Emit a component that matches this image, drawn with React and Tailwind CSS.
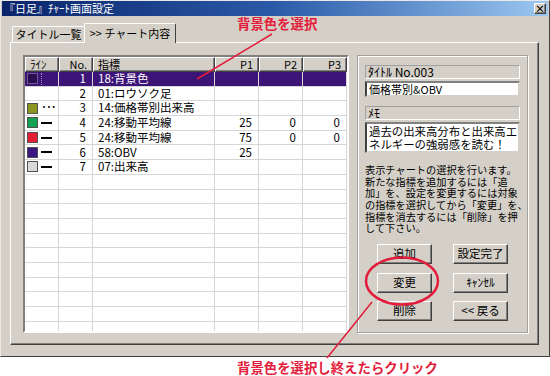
const rows = [
  { no: 1, name: "18:背景色", sw: "bg-[#2a0d52] border-[#6a5a90]", sel: true },
  { no: 2, name: "01:ロウソク足" },
  { no: 3, name: "14:価格帯別出来高", sw: "bg-[#8c9422] border-[#505050]", dots: true },
  { no: 4, name: "24:移動平均線", sw: "bg-[#12a052] border-[#505050]", p1: "25", p2: "0", p3: "0" },
  { no: 5, name: "24:移動平均線", sw: "bg-[#e41c34] border-[#505050]", p1: "75", p2: "0", p3: "0" },
  { no: 6, name: "58:OBV", sw: "bg-[#3c1680] border-[#505050]", p1: "25" },
  { no: 7, name: "07:出来高", sw: "bg-[#d8d8d8] border-[#505050]" },
];

const empties = Array.from({ length: 12 }, (_, i) => i);

const help = [
  "表示チャートの選択を行います。",
  "新たな指標を追加するには「追",
  "加」を、設定を変更するには対象",
  "の指標を選択してから「変更」を、",
  "指標を消去するには「削除」を押",
  "して下さい。",
];

const raised =
  "border border-t-white border-l-white border-r-[#404040] border-b-[#404040] shadow-[inset_-1px_-1px_0_#808080]";

const Btn = ({ children }) => (
  <div className={`w-[55px] h-[20px] flex items-center justify-center text-[11.5px] leading-none bg-[#d4d0c8] ${raised}`}>
    {children}
  </div>
);

const Cell = ({ w, right, children }) => (
  <div
    className={`${w} shrink-0 h-full border-r border-b border-[#d6d6d6] flex items-center ${
      right ? "justify-end pr-[6px]" : "pl-[5px]"
    }`}
  >
    {children}
  </div>
);

const Row = ({ r }) => (
  <div className={`flex h-[14.7px] text-[11.5px] leading-none ${r.sel ? "bg-[#3c1478] text-white" : "bg-white text-black"}`}>
    <div className="w-[34px] shrink-0 h-full border-r border-b border-[#d6d6d6] flex items-center pl-[2px] gap-[3px]">
      {r.sw && <div className={`w-[11px] h-[11px] border ${r.sw}`} />}
      {r.sel && <div className="h-[12px] border-l border-dotted border-[#a090c8]" />}
      {r.dots && <div className="text-[10px] tracking-[-1px] font-bold leading-none -mt-[3px]">···</div>}
      {r.sw && !r.sel && !r.dots && <div className="w-[11px] h-[2px] bg-black" />}
    </div>
    <Cell w="w-[34px]" right>{r.no}</Cell>
    <Cell w="w-[122px]">{r.name}</Cell>
    <Cell w="w-[44px]" right>{r.p1}</Cell>
    <Cell w="w-[44px]" right>{r.p2}</Cell>
    <Cell w="w-[44px]" right>{r.p3}</Cell>
  </div>
);

const Head = ({ w, right, children }) => (
  <div
    className={`${w} shrink-0 h-full flex items-center bg-[#d4d0c8] ${raised} ${
      right ? "justify-end pr-[5px]" : "pl-[4px]"
    }`}
  >
    {children}
  </div>
);

export default function App() {
  return (
    <div className="relative w-[550px] h-[376px] bg-white overflow-hidden font-['Noto_Sans_CJK_JP',sans-serif] text-black">
      {/* window */}
      <div className="w-[550px] h-[357px] bg-[#d4d0c8] border border-t-[#e8e8e8] border-l-[#e8e8e8] border-r-[#404040] border-b-[#404040] flex flex-col">
        <div className="mx-[1px] h-[15px] bg-gradient-to-r from-[#0a246a] via-[#2c5aa8] to-[#9cc8f0] flex items-center justify-between px-[2px]">
          <span className="text-white text-[11px] leading-none">『日足』ﾁｬｰﾄ画面設定</span>
          <div className={`w-[12px] h-[11px] bg-[#d4d0c8] flex items-center justify-center text-[10px] font-bold leading-none ${raised}`}>
            ×
          </div>
        </div>

        {/* tabs */}
        <div className="flex items-end h-[20px] mt-[6px] pl-[11px]">
          <div className="w-[73px] h-[16px] border-t border-l border-r border-t-white border-l-white border-r-[#404040] rounded-t-[2px] flex items-center justify-center text-[11px] leading-none">
            タイトル一覧
          </div>
          <div className="relative w-[92px] h-[20px] -ml-[1px] -mb-px z-10 bg-[#d4d0c8] border-t border-l border-r border-t-white border-l-white border-r-[#404040] rounded-t-[2px] flex items-center justify-center text-[11px] leading-none">
            &gt;&gt; チャート内容
          </div>
        </div>

        {/* panel */}
        <div className="ml-[9px] w-[529px] h-[303px] border border-t-white border-l-white border-r-[#404040] border-b-[#404040] shadow-[inset_-1px_-1px_0_#808080] flex pl-[12px] pt-[12px]">
          {/* list */}
          <div className="w-[326px] h-[278px] border-2 border-t-[#808080] border-l-[#808080] border-r-white border-b-white shadow-[inset_1px_1px_0_#404040] bg-white overflow-hidden">
            <div className="flex h-[15px] text-[11px] leading-none">
              <Head w="w-[34px]">ﾗｲﾝ</Head>
              <Head w="w-[34px]" right>No.</Head>
              <Head w="w-[122px]">指標</Head>
              <Head w="w-[44px]" right>P1</Head>
              <Head w="w-[44px]" right>P2</Head>
              <Head w="w-[44px]" right>P3</Head>
            </div>
            {rows.map((r) => (
              <Row key={r.no} r={r} />
            ))}
            {empties.map((i) => (
              <Row key={"e" + i} r={{ no: "" }} />
            ))}
          </div>

          {/* right group */}
          <div className="ml-[8px] w-[171px] h-[278px] border border-[#a0a0a0] shadow-[inset_1px_1px_0_#ffffff,1px_1px_0_#ffffff] px-[7px] pt-[9px] flex flex-col">
            <div className="h-[14px] border border-t-[#a0a0a0] border-l-[#a0a0a0] border-r-white border-b-white flex items-center pl-[2px] text-[12px] leading-none">
              ﾀｲﾄﾙ No.003
            </div>
            <div className="mt-[2px] h-[16px] bg-white border-2 border-t-[#808080] border-l-[#404040] border-r-[#d4d0c8] border-b-[#d4d0c8] flex items-center pl-[2px] text-[11px] leading-none">
              価格帯別&OBV
            </div>
            <div className="mt-[9px] h-[14px] border border-t-[#a0a0a0] border-l-[#a0a0a0] border-r-white border-b-white flex items-center pl-[2px] text-[12px] leading-none">
              ﾒﾓ
            </div>
            <div className="mt-[2px] h-[31px] bg-white border-2 border-t-[#808080] border-l-[#404040] border-r-[#d4d0c8] border-b-[#d4d0c8] pl-[2px] pt-[1px] text-[11.4px] leading-[13px] whitespace-nowrap">
              過去の出来高分布と出来高エ
              <br />
              ネルギーの強弱感を読む！
            </div>
            <div className="mt-[11px] h-[70px] flex flex-col whitespace-nowrap">
              {help.map((t) => (
                <div key={t} className="h-[11.7px] text-[10.2px] leading-[11.7px]">
                  {t}
                </div>
              ))}
            </div>
            <div className="mt-[10px] flex flex-col gap-[8.5px] items-center">
              <div className="flex gap-[21px]">
                <Btn>追加</Btn>
                <Btn>設定完了</Btn>
              </div>
              <div className="flex gap-[21px]">
                <Btn>変更</Btn>
                <Btn>ｷｬﾝｾﾙ</Btn>
              </div>
              <div className="flex gap-[21px]">
                <Btn>削除</Btn>
                <Btn>&lt;&lt; 戻る</Btn>
              </div>
            </div>
          </div>
        </div>
      </div>

      {/* bottom annotation */}
      <div className="pl-[237px] pt-[2px] text-[13.4px] leading-[16px] font-bold text-[#e41c3c]">
        背景色を選択し終えたらクリック
      </div>

      {/* top annotation */}
      <div className="absolute left-[237px] top-[15px] text-[13.4px] leading-[16px] font-bold text-[#e41c3c]">
        背景色を選択
      </div>

      <svg className="absolute left-0 top-0 pointer-events-none" width="550" height="376" viewBox="0 0 550 376">
        <line x1="272" y1="34" x2="197" y2="79" stroke="#e41c3c" strokeWidth="1.5" />
        <ellipse cx="402" cy="281" rx="36" ry="23.5" fill="none" stroke="#e41c3c" strokeWidth="2.5" />
        <line x1="372" y1="302" x2="327" y2="358" stroke="#e41c3c" strokeWidth="1.5" />
      </svg>
    </div>
  );
}
